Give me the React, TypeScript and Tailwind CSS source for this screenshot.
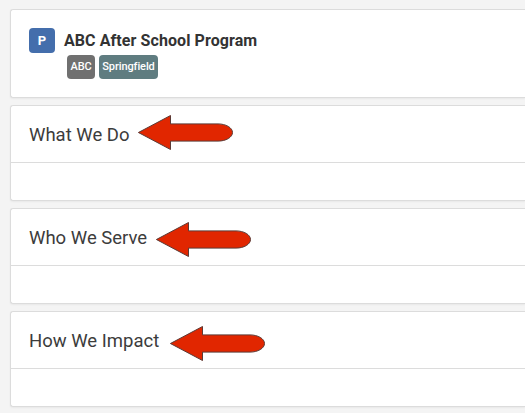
function Arrow({ className }: { className: string }) {
  return (
    <svg className={`absolute ${className}`} width="96" height="36" viewBox="0 0 96 36" aria-hidden="true">
      <path
        d="M0.4 17.5 L32.5 0.5 V8.9 H80 C88 8.9 94.5 12.7 94.5 17.5 C94.5 22.3 88 26.1 80 26.1 H32.5 V34.5 Z"
        fill="#e12600"
        stroke="#5c3a35"
        strokeWidth="1"
      />
    </svg>
  );
}

const card = "rounded-l-[3px] border border-r-0 border-[#dcdcdc] bg-white shadow-[0_1px_2px_rgba(0,0,0,0.05)]";

function Section({ title, arrow }: { title: string; arrow: string }) {
  return (
    <section className={`relative h-24 ${card}`}>
      <div className="flex h-[57px] items-center border-b border-[#dcdcdc] pt-0.5 pl-[18px]">
        <h2 className="text-[18.5px] leading-6 font-normal whitespace-nowrap text-[#3c3c3c]">{title}</h2>
      </div>
      <Arrow className={arrow} />
    </section>
  );
}

export default function App() {
  return (
    <main className="flex h-[413px] w-full flex-col gap-[7px] overflow-hidden bg-[#f4f4f4] pt-[9px] pl-2.5 font-[Roboto,sans-serif] text-[#333]">
      <header className={`h-[89px] shrink-0 pt-[18px] pl-[18px] ${card}`}>
        <div className="flex h-[25px] items-center">
          <span className="flex h-[25px] w-[26px] items-center justify-center rounded-[4px] bg-[#446eac] text-[13px] font-bold text-white">
            P
          </span>
          <h1 className="ml-[9px] text-base leading-[25px] font-bold tracking-[0.08px]">ABC After School Program</h1>
        </div>
        <div className="mt-[2px] ml-[38px] flex gap-1 text-[11px] font-medium tracking-[-0.1px] text-white">
          <span className="flex h-6 w-7 items-center justify-center rounded-[4px] bg-[#707070]">ABC</span>
          <span className="flex h-6 w-[59px] items-center justify-center rounded-[4px] bg-[#5f7c80]">Springfield</span>
        </div>
      </header>
      <Section title="What We Do" arrow="left-[127px] top-[9px]" />
      <Section title="Who We Serve" arrow="left-[145px] top-[13px]" />
      <Section title="How We Impact" arrow="left-[159px] top-[14px]" />
    </main>
  );
}
